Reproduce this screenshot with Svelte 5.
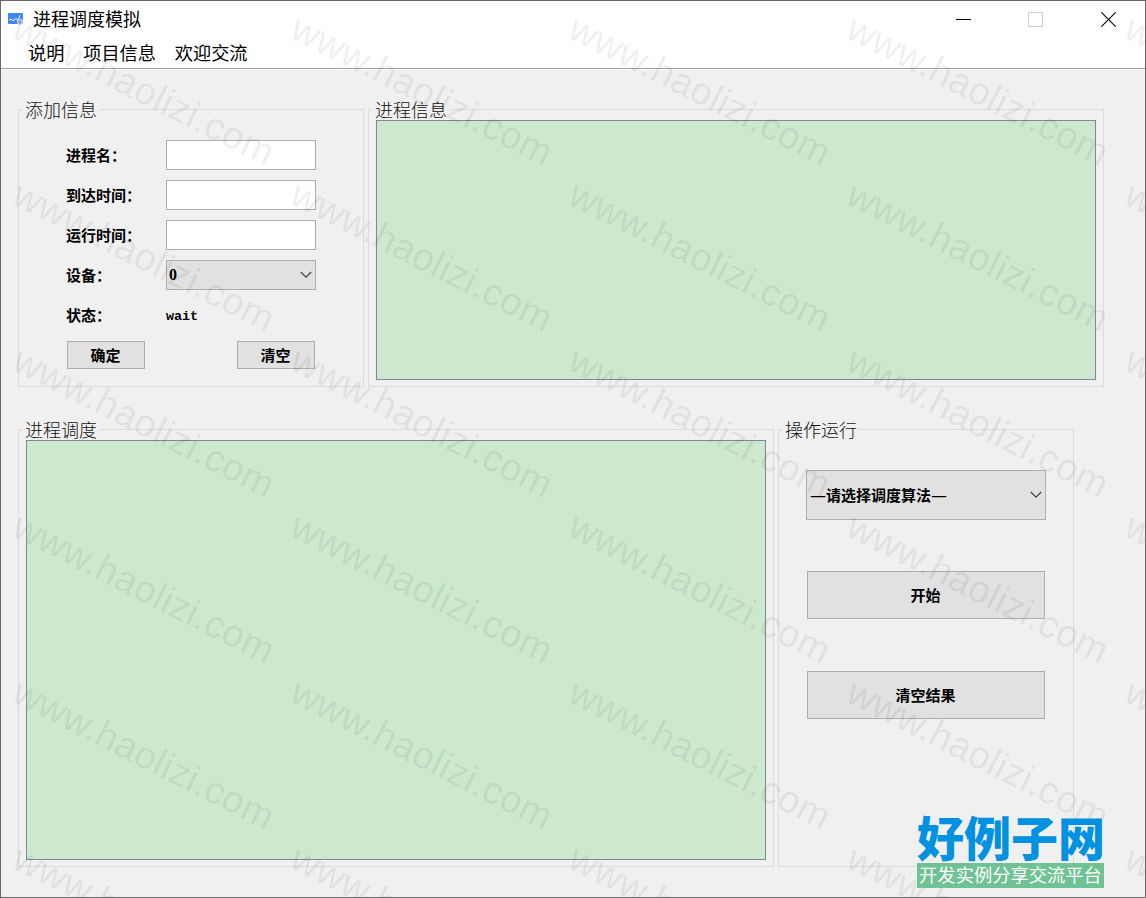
<script>
	const menus = ['说明', '项目信息', '欢迎交流'];

	let name = $state('');
	let arriveTime = $state('');
	let runTime = $state('');
	let device = $state('0');
	let status = $state('wait');
	let algorithm = $state('请选择调度算法');

	// the watermark repeats on a fixed grid over the whole window
	const marks = [];
	for (let y = 37; y < 920; y += 166) {
		for (let x = 10; x < 1146; x += 278) {
			marks.push({x, y});
		}
	}

	function clearForm() {
		name = '';
		arriveTime = '';
		runTime = '';
	}
</script>

{#snippet chevron()}
	<svg class="chevron" width="12" height="8" viewBox="0 0 12 8">
		<path d="M0.8 1 L6 6.2 L11.2 1" fill="none" stroke="#444" stroke-width="1.2" />
	</svg>
{/snippet}

<div class="window">
	<header>
		<div class="titlebar">
			<svg class="app-icon" width="16" height="13" viewBox="0 0 16 13">
				<rect x="0" y="0" width="15" height="11" rx="1" fill="#4086ee" />
				<path d="M1 7.2 L3 6.2 L5 7.8 L7.5 5.6 L9.5 6.4 L11 5 L12.2 2.2" fill="none" stroke="#fff" stroke-width="1" />
				<path d="M12 6 L14.6 7.2 V9.6 Q14 11.6 12 12.2 Q10 11.6 9.4 9.6 V7.2 Z" fill="#a9c8f8" stroke="#fff" stroke-width="0.5" />
				<circle cx="12" cy="9" r="1" fill="#5b96f0" />
			</svg>
			<span class="title">进程调度模拟</span>
			<div class="controls">
				<svg width="15" height="15" viewBox="0 0 15 15"><path d="M0 7.5H15" stroke="#000" /></svg>
				<svg width="15" height="15" viewBox="0 0 15 15"><rect x="0.5" y="0.5" width="14" height="14" fill="none" stroke="#ccc" /></svg>
				<svg width="15" height="15" viewBox="0 0 15 15"><path d="M0.3 0.3L14.7 14.7M14.7 0.3L0.3 14.7" stroke="#000" stroke-width="1.1" /></svg>
			</div>
		</div>
		<nav>
			{#each menus as menu}
				<span>{menu}</span>
			{/each}
		</nav>
	</header>

	<main>
		<div class="row top">
			<section class="group add">
				<h2>添加信息</h2>
				<div class="form">
					<label for="name">进程名：</label>
					<input id="name" bind:value={name} />
					<label for="arrive">到达时间：</label>
					<input id="arrive" bind:value={arriveTime} />
					<label for="run">运行时间：</label>
					<input id="run" bind:value={runTime} />
					<span class="label">设备：</span>
					<div class="combo"><span class="digit">{device}</span>{@render chevron()}</div>
					<span class="label">状态：</span>
					<span class="status">{status}</span>
				</div>
				<div class="actions">
					<button>确定</button>
					<button onclick={clearForm}>清空</button>
				</div>
			</section>
			<section class="group info">
				<h2>进程信息</h2>
				<div class="output"></div>
			</section>
		</div>

		<div class="row bottom">
			<section class="group schedule">
				<h2>进程调度</h2>
				<div class="output"></div>
			</section>
			<section class="group operate">
				<h2>操作运行</h2>
				<div class="combo">
					<span class="choice"><span class="dash">—</span>{algorithm}<span class="dash">—</span></span>
					{@render chevron()}
				</div>
				<button>开始</button>
				<button>清空结果</button>
			</section>
		</div>
	</main>

	<svg class="watermark" width="1146" height="898" viewBox="0 0 1146 898">
		{#each marks as m}
			<text transform="translate({m.x} {m.y}) rotate(26.8)" textLength="287">www.haolizi.com</text>
		{/each}
	</svg>

	<div class="logo">
		<strong>好例子网</strong>
		<span>开发实例分享交流平台</span>
	</div>
</div>

<style>
	:global(body) {
		margin: 0;
	}

	.window {
		position: relative;
		width: 1146px;
		height: 898px;
		box-sizing: border-box;
		border: 1px solid #686868;
		background: #f0f0f0;
		color: #000;
		font-family: "Noto Sans CJK SC", sans-serif;
		overflow: hidden;
	}

	header {
		height: 67px;
		background: #fff;
		border-bottom: 1px solid #a0a0a0;
		box-shadow: 0 1px #fff;
	}

	.titlebar {
		display: flex;
		align-items: center;
		height: 37px;
		padding: 0 29px 0 7px;
		font-size: 18px;
	}

	.title {
		margin-left: 9px;
		padding-bottom: 3px;
	}

	.controls {
		display: flex;
		gap: 57px;
		margin-left: auto;
	}

	.controls svg:nth-child(2) {
		margin-right: 1px;
	}

	nav {
		display: flex;
		gap: 18.8px;
		padding-left: 27px;
		font-size: 18.2px;
		line-height: 28px;
	}

	main {
		padding: 40px 0 0 17px;
	}

	.row {
		display: flex;
		gap: 4px;
	}

	.row.bottom {
		margin-top: 42px;
	}

	.group {
		position: relative;
		box-sizing: border-box;
		border: 1px solid #dcdcdc;
	}

	.top .group {
		height: 278px;
	}

	.bottom .group {
		height: 438px;
	}

	.group h2 {
		position: absolute;
		top: -11px;
		left: 4px;
		margin: 0;
		padding: 0 2px;
		background: #f0f0f0;
		font-size: 18px;
		font-weight: 300;
		line-height: 21px;
		height: 21px;
		color: #111;
	}

	.add {
		width: 346px;
		padding: 30px 47px 0;
		font-size: 15px;
		font-weight: bold;
	}

	.info {
		width: 736px;
		padding: 10px 7px 6px;
	}

	.schedule {
		width: 756px;
		padding: 10px 7px 6px;
	}

	.operate {
		display: flex;
		flex-direction: column;
		align-items: center;
		width: 296px;
		padding-top: 40px;
		font-size: 15px;
		font-weight: bold;
	}

	.output {
		position: relative;
		height: 100%;
		box-sizing: border-box;
		border: 1px solid #828790;
		background: #cce8cf;
	}

	.form {
		display: grid;
		grid-template-columns: 100px 150px;
		grid-auto-rows: 30px;
		row-gap: 10px;
		align-items: center;
	}

	label,
	.label {
		padding-bottom: 2px;
	}

	input {
		width: 150px;
		height: 30px;
		box-sizing: border-box;
		padding: 0 4px;
		border: 1px solid #abadb3;
		background: #fff;
		font: inherit;
	}

	.combo {
		display: flex;
		align-items: center;
		justify-content: space-between;
		height: 30px;
		box-sizing: border-box;
		padding: 0 3px 0 2px;
		border: 1px solid #adadb3;
		background: #e1e1e1;
	}

	.digit {
		font-family: "Liberation Serif", serif;
		font-size: 16px;
	}

	.choice {
		display: flex;
		align-items: center;
		padding: 0 0 2px 1px;
	}

	.dash {
		width: 16px;
		font-size: 18px;
		font-weight: 400;
		line-height: 20px;
		text-align: center;
	}

	.status {
		padding-top: 2px;
		font-family: "Liberation Mono", monospace;
		font-size: 13.4px;
	}

	.actions {
		display: flex;
		justify-content: space-between;
		width: 248px;
		margin: 11px 0 0 1px;
	}

	button {
		box-sizing: border-box;
		padding: 0 1px 2px 0;
		border: 1px solid #adadad;
		border-radius: 0;
		background: #e1e1e1;
		color: #000;
		font: inherit;
	}

	.actions button {
		width: 78px;
		height: 28px;
		padding-bottom: 0;
		line-height: 26px;
	}

	.operate .combo {
		width: 240px;
		height: 50px;
		margin-bottom: 51px;
	}

	.operate button {
		width: 238px;
		height: 48px;
		margin-bottom: 52px;
	}

	.watermark {
		position: absolute;
		top: -1px;
		left: -1px;
		pointer-events: none;
	}

	.watermark text {
		font-family: "Liberation Sans", Arial, sans-serif;
		font-size: 38px;
		fill: #000;
		fill-opacity: 0.075;
	}

	.logo {
		position: absolute;
		left: 916px;
		top: 813px;
		width: 187px;
		text-align: center;
		white-space: nowrap;
	}

	.logo strong {
		display: block;
		height: 49px;
		color: #0092e0;
		font-size: 47px;
		font-weight: 900;
		line-height: 43px;
	}

	.logo span {
		display: block;
		height: 25px;
		background: #6fc293;
		color: #fff;
		font-size: 18.3px;
		line-height: 23px;
	}
</style>
